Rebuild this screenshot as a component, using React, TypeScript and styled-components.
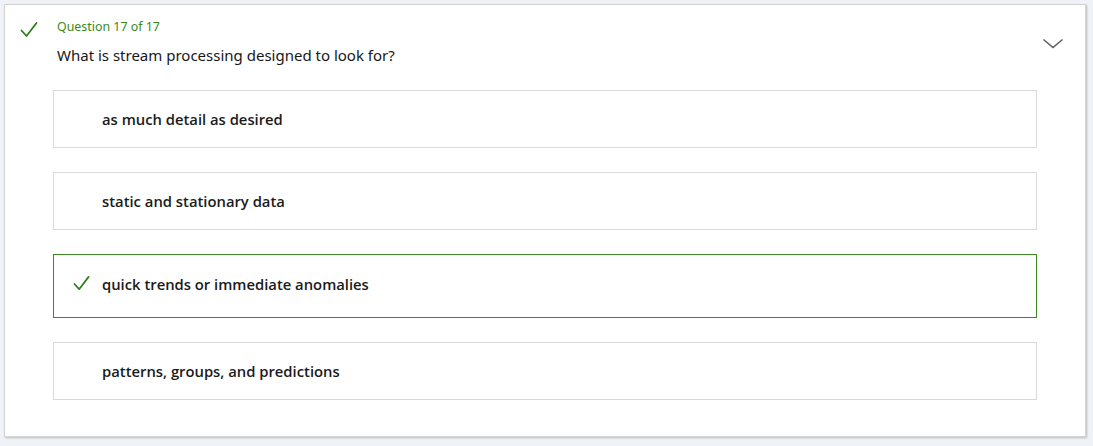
import React from "react";
import styled, { createGlobalStyle } from "styled-components";

const Global = createGlobalStyle`
  html, body { margin: 0; padding: 0; background: #eff2f6; }
  body { font-family: "Noto Sans", "Open Sans", Arial, sans-serif; color: #171717; }
`;

const Page = styled.div`
  padding: 4px 7px 9px 4px;
`;

const Card = styled.section`
  background: #fff;
  border: 1px solid #d4d4d4;
  box-shadow: 1px 1px 2px rgba(0, 0, 0, 0.22);
  padding: 13px 21px 36px 15px;
`;

const Header = styled.div`
  display: flex;
  align-items: flex-start;
  gap: 19px;
`;

const HeaderIcon = styled.div`
  width: 18px;
  padding-top: 3px;
  color: #2d7d1b;
`;

const HeaderText = styled.div`
  flex: 1;
  display: flex;
  flex-direction: column;
`;

const Label = styled.div`
  font-size: 12.4px;
  line-height: 16px;
  margin-top: 1px;
  color: #3a8a1e;
`;

const QuestionText = styled.div`
  font-size: 15px;
  line-height: 22px;
  margin-top: 9px;
`;

const Chevron = styled.button`
  border: 0;
  background: none;
  padding: 0;
  margin-top: 20px;
  width: 22px;
  height: 12px;
  color: #5c5c5c;
  display: flex;
`;

const Options = styled.div`
  display: flex;
  flex-direction: column;
  gap: 24px;
  margin: 24px 27px 0 33px;
`;

const Option = styled.div<{ $correct?: boolean }>`
  display: flex;
  align-items: center;
  border: 1px solid ${(p) => (p.$correct ? "#3b8a22" : "#d9d9d9")};
  height: ${(p) => (p.$correct ? 64 : 58)}px;
  box-sizing: border-box;
  padding: 0 0 ${(p) => (p.$correct ? 5 : 0)}px 19px;
  font-family: "Open Sans", "Noto Sans", Arial, sans-serif;
  font-size: 14.8px;
  font-weight: 600;
  color: #1b1b1b;
`;

const OptionIcon = styled.span`
  width: 17px;
  margin-right: 12px;
  display: flex;
  color: #2d7d1b;
`;

const Check = ({ size }: { size: number }) => (
  <svg width={size} height={size} viewBox="0 0 18 18" fill="none">
    <path d="M1.5 9.5 L6.5 15 L16.5 2" stroke="currentColor" strokeWidth="1.8" strokeLinecap="round" strokeLinejoin="round" />
  </svg>
);

const options = [
  { text: "as much detail as desired" },
  { text: "static and stationary data" },
  { text: "quick trends or immediate anomalies", correct: true },
  { text: "patterns, groups, and predictions" },
];

export default function App() {
  return (
    <Page>
      <Global />
      <Card>
        <Header>
          <HeaderIcon>
            <Check size={18} />
          </HeaderIcon>
          <HeaderText>
            <Label>Question 17 of 17</Label>
            <QuestionText>What is stream processing designed to look for?</QuestionText>
          </HeaderText>
          <Chevron aria-label="Collapse">
            <svg width="22" height="12" viewBox="0 0 22 12" fill="none">
              <path d="M1.5 1.5 L11 9.5 L20.5 1.5" stroke="currentColor" strokeWidth="1.5" />
            </svg>
          </Chevron>
        </Header>
        <Options>
          {options.map((o) => (
            <Option key={o.text} $correct={o.correct}>
              <OptionIcon>{o.correct ? <Check size={17} /> : null}</OptionIcon>
              {o.text}
            </Option>
          ))}
        </Options>
      </Card>
    </Page>
  );
}
